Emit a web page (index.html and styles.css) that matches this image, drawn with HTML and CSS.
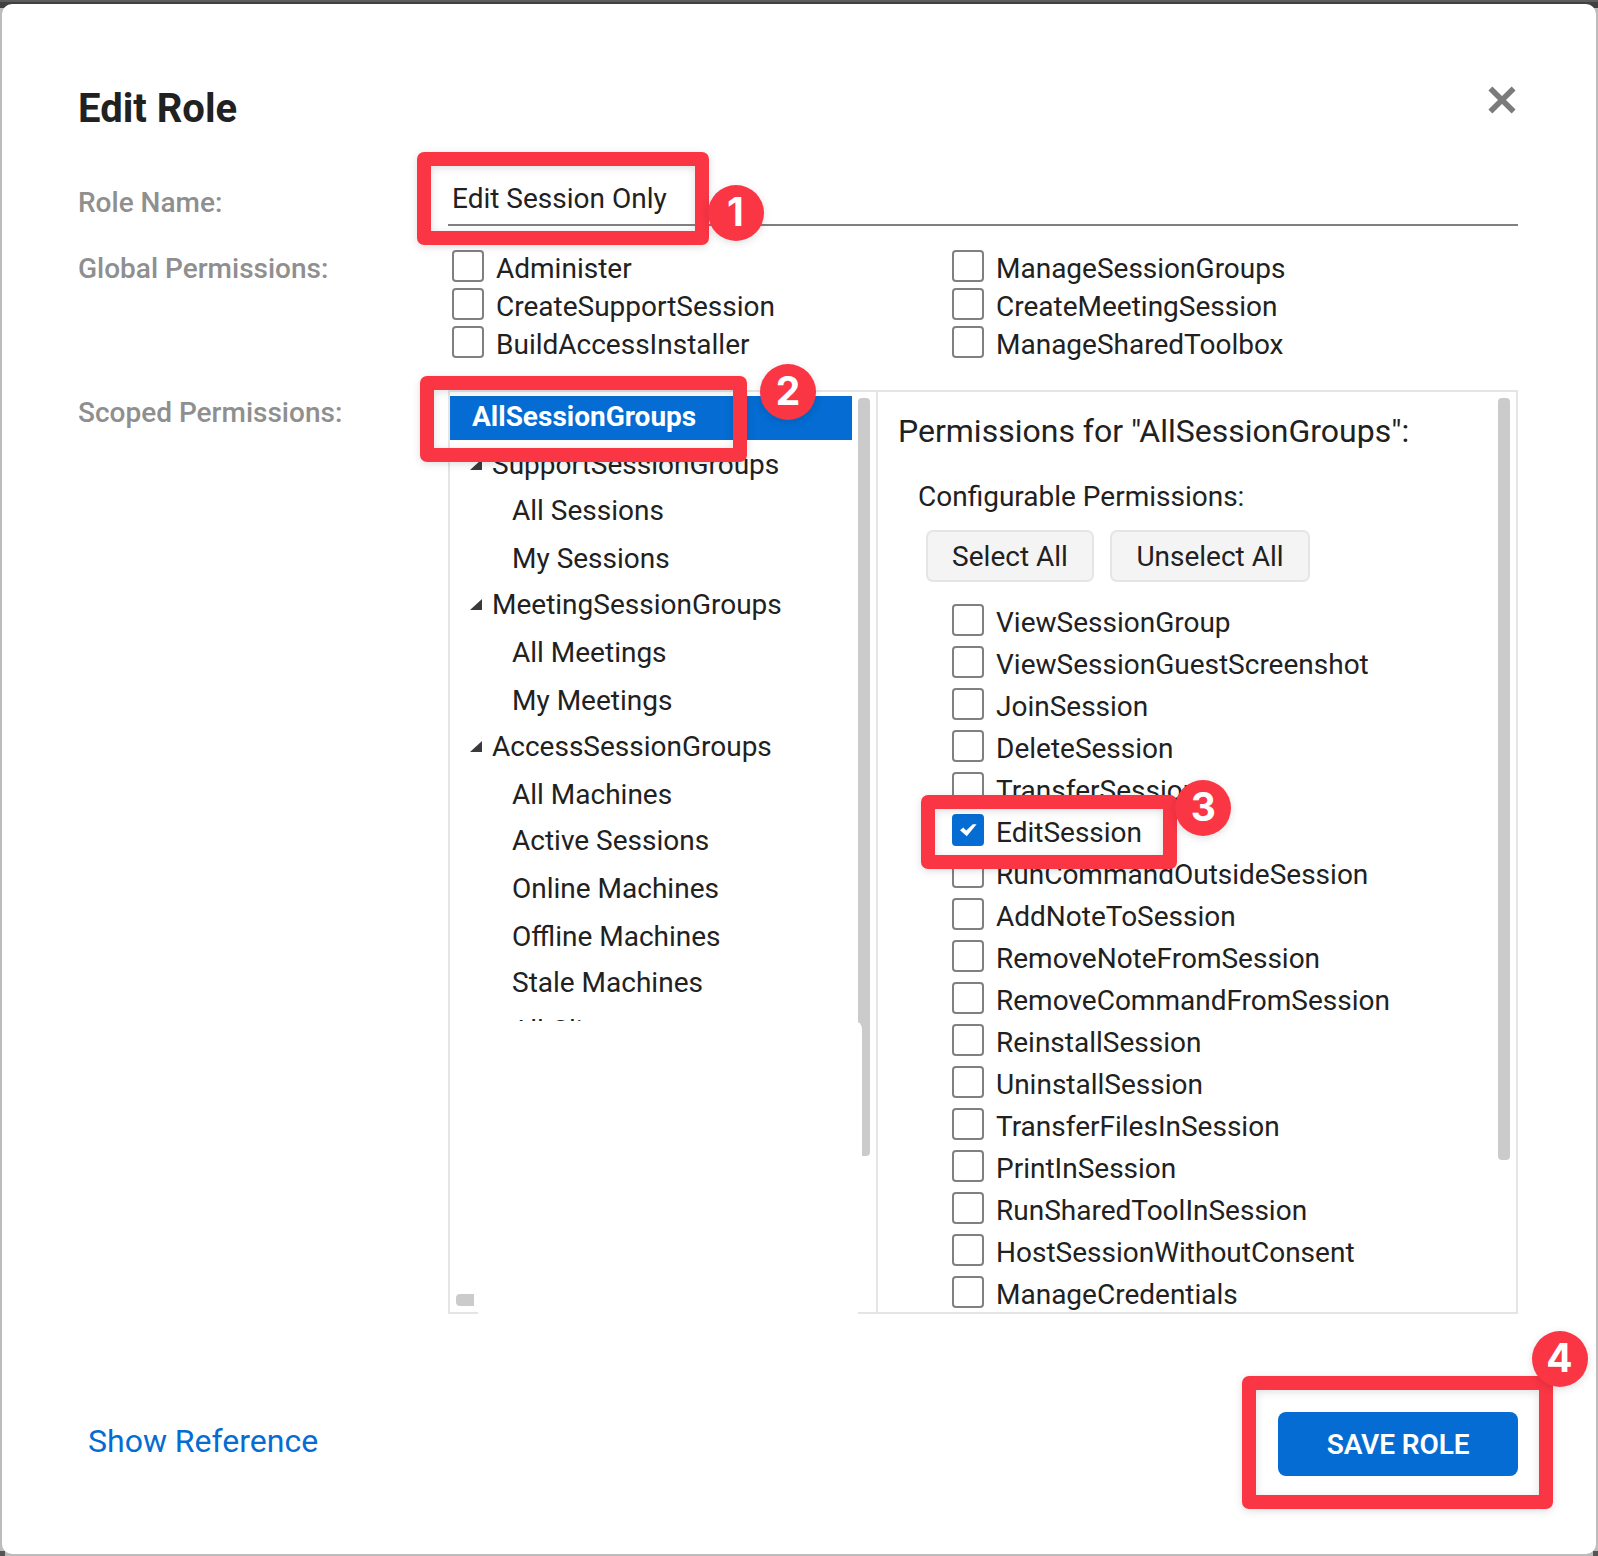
FILE: index.html
```
<!DOCTYPE html>
<html lang="en">
<head>
<meta charset="utf-8">
<title>Edit Role</title>
<link rel="stylesheet" href="styles.css">
</head>
<body>
<main class="modal">
  <header class="header">
    <h1 class="title">Edit Role</h1>
    <button class="close" aria-label="Close"><svg width="28" height="28" viewBox="0 0 28 28"><path d="M2.4 2.4 25.6 25.6M25.6 2.4 2.4 25.6" stroke="#7b7b7b" stroke-width="5.6"/></svg></button>
  </header>
  <div class="form">
    <div class="label label-name">Role Name:</div>
    <div class="name-field">Edit Session Only</div>
    <div class="label label-global">Global Permissions:</div>
    <div class="globals">
      <label class="check"><i class="box"></i>Administer</label>
      <label class="check"><i class="box"></i>ManageSessionGroups</label>
      <label class="check"><i class="box"></i>CreateSupportSession</label>
      <label class="check"><i class="box"></i>CreateMeetingSession</label>
      <label class="check"><i class="box"></i>BuildAccessInstaller</label>
      <label class="check"><i class="box"></i>ManageSharedToolbox</label>
    </div>
    <div class="label label-scoped">Scoped Permissions:</div>
    <div class="scoped">
      <div class="tree">
        <div class="node root">AllSessionGroups</div>
        <div class="nodes">
          <div class="node group short"><svg class="arrow" width="12" height="11" viewBox="0 0 12 11"><path d="M12 0V11H0Z" fill="#3a3a3a"/></svg>SupportSessionGroups</div>
          <div class="node leaf">All Sessions</div>
          <div class="node leaf short">My Sessions</div>
          <div class="node group"><svg class="arrow" width="12" height="11" viewBox="0 0 12 11"><path d="M12 0V11H0Z" fill="#3a3a3a"/></svg>MeetingSessionGroups</div>
          <div class="node leaf">All Meetings</div>
          <div class="node leaf short">My Meetings</div>
          <div class="node group"><svg class="arrow" width="12" height="11" viewBox="0 0 12 11"><path d="M12 0V11H0Z" fill="#3a3a3a"/></svg>AccessSessionGroups</div>
          <div class="node leaf short">All Machines</div>
          <div class="node leaf">Active Sessions</div>
          <div class="node leaf">Online Machines</div>
          <div class="node leaf short">Offline Machines</div>
          <div class="node leaf">Stale Machines</div>
          <div class="node leaf">All Clients</div>
        </div>
        <div class="thumb tree-thumb"></div>
        <div class="thumb tree-hthumb"></div>
        <div class="blank"></div>
        <div class="blank-foot"></div>
      </div>
      <div class="perms">
        <h2 class="perms-title">Permissions for "AllSessionGroups":</h2>
        <p class="perms-sub">Configurable Permissions:</p>
        <div class="buttons">
          <button class="btn select">Select All</button>
          <button class="btn unselect">Unselect All</button>
        </div>
        <div class="list">
          <label class="check"><i class="box"></i>ViewSessionGroup</label>
          <label class="check"><i class="box"></i>ViewSessionGuestScreenshot</label>
          <label class="check"><i class="box"></i>JoinSession</label>
          <label class="check"><i class="box"></i>DeleteSession</label>
          <label class="check"><i class="box"></i>TransferSession</label>
          <label class="check"><i class="box checked"><svg width="32" height="32" viewBox="0 0 32 32"><path d="M8 16.3 11.3 13.5 14.2 16.5 20.8 10.2 24.6 10.2 14.8 22.3Z" fill="#fff"/></svg></i>EditSession</label>
          <label class="check"><i class="box"></i>RunCommandOutsideSession</label>
          <label class="check"><i class="box"></i>AddNoteToSession</label>
          <label class="check"><i class="box"></i>RemoveNoteFromSession</label>
          <label class="check"><i class="box"></i>RemoveCommandFromSession</label>
          <label class="check"><i class="box"></i>ReinstallSession</label>
          <label class="check"><i class="box"></i>UninstallSession</label>
          <label class="check"><i class="box"></i>TransferFilesInSession</label>
          <label class="check"><i class="box"></i>PrintInSession</label>
          <label class="check"><i class="box"></i>RunSharedToolInSession</label>
          <label class="check"><i class="box"></i>HostSessionWithoutConsent</label>
          <label class="check"><i class="box"></i>ManageCredentials</label>
        </div>
        <div class="thumb perms-thumb"></div>
      </div>
    </div>
  </div>
  <footer class="footer">
    <a class="ref">Show Reference</a>
    <button class="save">SAVE ROLE</button>
  </footer>
</main>
<div class="mark mark1"></div><div class="num num1">1</div>
<div class="mark mark2"></div><div class="num num2">2</div>
<div class="mark mark3"></div><div class="num num3">3</div>
<div class="mark mark4"></div><div class="num num4">4</div>
</body>
</html>
```
FILE: styles.css
```
* { box-sizing: border-box; }
body {
  margin: 0;
  position: relative;
  width: 1598px;
  height: 1556px;
  padding: 4px 2px 2px;
  overflow: hidden;
  font: 28px/38px Roboto, sans-serif;
  color: #212121;
  background:
    linear-gradient(#5c5c5c, #5c5c5c) 0 0 / 100% 2px no-repeat,
    linear-gradient(#404040, #404040) 0 0 / 100% 8px no-repeat,
    linear-gradient(#555, #555) 0 100% / 5px 5px no-repeat,
    linear-gradient(#555, #555) 100% 100% / 5px 5px no-repeat,
    #bcbcbc;
}
button { font: inherit; color: inherit; border: 0; padding: 0; margin: 0; background: none; }
.modal { height: 1550px; background: #fff; border-radius: 10px; padding: 76px 78px 0 76px; }
.header { display: flex; justify-content: space-between; height: 100px; }
.title { margin: 0; font-size: 40px; line-height: 58px; font-weight: 700; }
.close { width: 28px; height: 28px; margin: 6px 2px 0 0; }
.close svg { display: block; }
.form { display: grid; grid-template-columns: 370px 1070px; grid-template-rows: 46px 164px 924px; }
.label { font-weight: 500; color: #8f8f8f; }
.label-name { padding-top: 4px; }
.label-global { padding-top: 24px; }
.label-scoped { padding-top: 4px; }
.name-field { padding-left: 4px; line-height: 38px; border-bottom: 2px solid #808080; }
.globals { display: grid; grid-template-columns: 500px 1fr; grid-auto-rows: 38px; padding: 24px 0 0 4px; align-content: start; }
.check { display: flex; line-height: 38px; }
.box { width: 32px; height: 32px; margin-right: 12px; border: 2px solid #808080; border-radius: 4px; flex: none; }
.checked { border: 0; background: #046cd2; }
.checked svg { display: block; }
.scoped { display: grid; grid-template-columns: 426px 1fr; grid-template-rows: 920px; border: 2px solid #e5e5e5; height: 924px; }
.tree { position: relative; padding-top: 4px; }
.root { width: 402px; height: 44px; line-height: 42px; padding-left: 22px; background: #046cd2; color: #fff; font-weight: 700; }
.nodes { padding-top: 7px; height: 580.5px; overflow: hidden; }
.nodes .node { height: 48px; line-height: 36px; display: flex; }
.nodes .short { height: 46px; }
.group { padding-left: 20px; }
.arrow { margin: 12px 10px 0 0; }
.leaf { padding-left: 62px; }
.thumb { position: absolute; background: #cbcbcb; border-radius: 4px; }
.tree-thumb { left: 408px; top: 6px; width: 12px; height: 758px; }
.tree-hthumb { left: 6px; top: 902px; width: 30px; height: 12px; }
.blank { position: absolute; left: 24px; top: 629px; width: 388px; height: 291px; background: #fff; border-radius: 0 8px 0 0; }
.blank-foot { position: absolute; left: 28px; top: 918px; width: 380px; height: 6px; background: #fff; }
.perms { position: relative; border-left: 2px solid #e5e5e5; padding: 20px 0 0 20px; }
.perms-title { margin: 0; font-size: 32px; line-height: 38px; font-weight: 400; }
.perms-sub { margin: 28px 0 0 20px; height: 36px; line-height: 38px; }
.buttons { display: flex; gap: 16px; margin: 16px 0 0 28px; }
.btn { height: 52px; padding-top: 1px; border: 2px solid #e5e5e5; border-radius: 7px; background: #f4f4f4; }
.select { width: 168px; }
.unselect { width: 200px; }
.list { display: grid; grid-auto-rows: 42px; margin: 22px 0 0 54px; }
.perms-thumb { right: 6px; top: 6px; width: 12px; height: 762px; }
.footer { display: flex; justify-content: space-between; padding: 98px 0 0 10px; }
.ref { font-size: 32px; line-height: 58px; color: #046cd2; }
.save { width: 240px; height: 64px; padding-top: 2px; border-radius: 8px; background: #046cd2; color: #fff; font-weight: 600; letter-spacing: -.1px; }
.mark { position: absolute; border: 14px solid #fa3544; border-radius: 7px; box-shadow: 0 2px 8px rgba(0,0,0,.13), inset 0 2px 8px rgba(0,0,0,.13); }
.num { position: absolute; width: 56px; height: 56px; border-radius: 50%; background: #fa3544; color: #fff; font: 700 39px/54px Inter, sans-serif; text-align: center; box-shadow: 0 2px 8px rgba(0,0,0,.13); }
.mark1 { left: 417px; top: 152px; width: 292px; height: 93px; }
.mark2 { left: 420px; top: 376px; width: 327px; height: 86px; }
.mark3 { left: 921px; top: 795px; width: 256px; height: 74px; }
.mark4 { left: 1242px; top: 1376px; width: 311px; height: 133px; }
.num1 { left: 707.5px; top: 185px; }
.num2 { left: 760px; top: 364px; }
.num3 { left: 1175.4px; top: 779.5px; }
.num4 { left: 1531.5px; top: 1330.5px; }
```
